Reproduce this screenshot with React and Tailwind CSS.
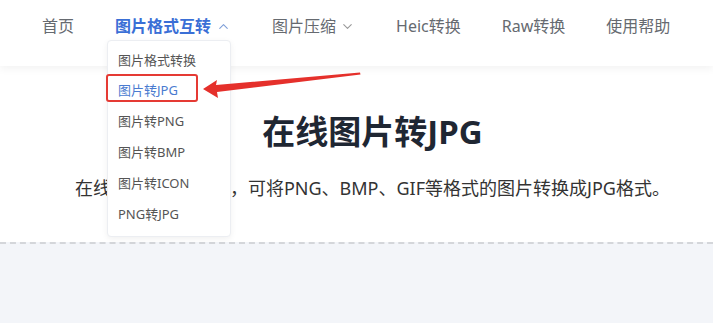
import React from "react";
import { ChevronUp, ChevronDown } from "lucide-react";

const font = { fontFamily: '"Noto Sans", "Noto Sans CJK SC", sans-serif' };

const items = ["图片格式转换", "图片转JPG", "图片转PNG", "图片转BMP", "图片转ICON", "PNG转JPG"];

const App = () => {
  return (
    <div className="relative w-[713px] h-[323px] overflow-hidden bg-white flex flex-col" style={font}>
      <header className="relative z-10 h-[66px] shrink-0 bg-white shadow-[0_3px_8px_rgba(0,0,0,0.05)]">
        <nav className="flex items-center h-[52px] pl-[42px] gap-[41px] text-[16px] text-[#666a70]">
          <span>首页</span>
          <span className="flex items-center gap-[5px] font-bold text-[#3a6fd6]">
            图片格式互转 <ChevronUp className="w-[15px] h-[15px] text-[#7f9fd8]" strokeWidth={1.75} />
          </span>
          <span className="flex items-center gap-[4px]">
            图片压缩 <ChevronDown className="w-[15px] h-[15px] text-[#999]" strokeWidth={1.75} />
          </span>
          <span>Heic转换</span>
          <span>Raw转换</span>
          <span>使用帮助</span>
        </nav>
        <div className="absolute left-[107px] top-[40px] w-[124px] bg-white border border-[#eceef2] rounded-[4px] shadow-[0_2px_6px_rgba(0,0,0,0.06)] pt-[4px] pb-[6px]">
          {items.map((t, i) => (
            <div key={t} className={`h-[30.8px] flex items-center pl-[10px] text-[13px] ${i === 1 ? "text-[#4a7bd0]" : "text-[#555]"}`}>
              {t}
            </div>
          ))}
        </div>
        <div className="absolute left-[106px] top-[74px] w-[92px] h-[28px] border-2 border-[#e53a34] rounded-[3px]" />
        <svg className="absolute left-0 top-0 pointer-events-none" width="713" height="120" viewBox="0 0 713 120">
          <polygon points="203,89 217,80 216,85 360,72.5 360.5,74.5 217,92 218,98" fill="#e5302b" />
        </svg>
      </header>
      <section className="h-[176px] shrink-0 flex flex-col items-center pt-[48px] pl-[32px]">
        <h1 className="text-[33px] leading-[36px] font-bold text-[#1f2733]">在线图片转JPG</h1>
        <p className="mt-[26px] text-[18px] leading-[24px] text-[#333]">在线图片转JPG工具，可将PNG、BMP、GIF等格式的图片转换成JPG格式。</p>
      </section>
      <div className="flex-1 bg-[#f3f5f9] border-t-2 border-dashed border-[#d4d6da]" />
    </div>
  );
};

export default App;
